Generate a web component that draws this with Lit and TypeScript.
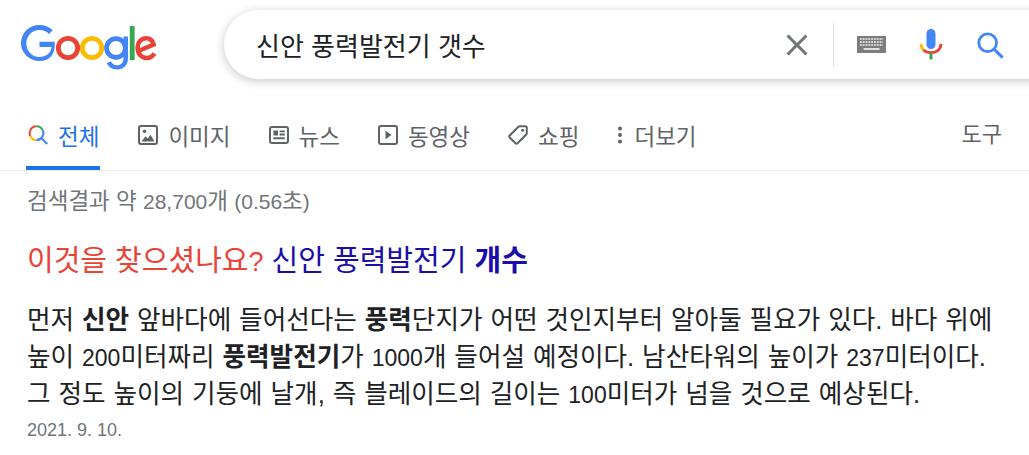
import { LitElement, html, css, svg } from "lit";
import { customElement } from "lit/decorators.js";

const tabs = [
  { label: "전체", active: true, icon: svg`<path d="M2.300 5.300A6.800 6.800 0 0 1 8.500 1.300" fill="none" stroke="#ea4335" stroke-width="2"/><path d="M8.500 1.300A6.800 6.800 0 0 1 14.700 5.300" fill="none" stroke="#34a853" stroke-width="2"/><path d="M2.300 5.300A6.800 6.800 0 0 0 2.300 11" fill="none" stroke="#ea4335" stroke-width="2"/><path d="M2.300 11A6.800 6.800 0 0 0 8.500 15" fill="none" stroke="#fbbc05" stroke-width="2"/><path d="M14.700 5.300A6.800 6.800 0 0 1 8.500 15" fill="none" stroke="#4285f4" stroke-width="2"/><path d="M13.300 13L19.300 19" stroke="#4285f4" stroke-width="2"/>` },
  { label: "이미지", icon: svg`<rect x="1" y="1" width="18" height="18" rx="2" fill="none" stroke="#5f6368" stroke-width="2"/><circle cx="6.500" cy="6.300" r="1.800" fill="#5f6368"/><path d="M3.500 16.500L7.500 11.200L9.800 13.500L12.500 9.800L16.500 16.500Z" fill="#5f6368"/>` },
  { label: "뉴스", icon: svg`<rect x="1" y="2" width="18" height="16" rx="2" fill="none" stroke="#5f6368" stroke-width="2"/><path d="M4.400 5.400H9V10.400H4.400ZM10.600 5.400H15.800V7.200H10.600ZM10.600 8.600H15.800V10.400H10.600ZM4.400 12.200H15.800V14.200H4.400Z" fill="#5f6368"/>` },
  { label: "동영상", icon: svg`<rect x="1" y="1" width="18" height="18" rx="2" fill="none" stroke="#5f6368" stroke-width="2"/><path d="M7.500 5.700L13.500 10L7.500 14.300Z" fill="#5f6368"/>` },
  { label: "쇼핑", icon: svg`<path d="M1.700 10.500L10.500 1.700C10.900 1.300 11.300 1.200 11.700 1.200H17.200C18 1.200 18.800 2 18.800 2.800V8.300C18.800 8.700 18.700 9.100 18.300 9.500L9.500 18.300C8.900 18.900 8.100 18.900 7.500 18.300L1.700 12.500C1.100 11.900 1.100 11.100 1.700 10.500Z" fill="none" stroke="#5f6368" stroke-width="2"/><circle cx="14.700" cy="5.300" r="1.500" fill="#5f6368"/>` },
  { label: "더보기", narrow: true, icon: svg`<circle cx="4" cy="3.500" r="2" fill="#5f6368"/><circle cx="4" cy="10" r="2" fill="#5f6368"/><circle cx="4" cy="16.500" r="2" fill="#5f6368"/>` },
];

@customElement("app-root")
export class AppRoot extends LitElement {
  static styles = css`
    :host {
      display: block;
      width: 1029px;
      height: 455px;
      overflow: hidden;
      background: #fff;
      font-family: "Liberation Sans", Arial, "Noto Sans CJK KR", sans-serif;
      color: #202124;
    }
    .head {
      display: flex;
      align-items: flex-start;
      height: 110px;
      padding-top: 10px;
      box-sizing: border-box;
    }
    .logo {
      width: 136px;
      height: 46px;
      margin: 14px 68px 0 20px;
      flex: none;
    }
    .search {
      flex: none;
      width: 840px;
      height: 69px;
      border-radius: 35px;
      box-shadow: 0 2px 8px 1px rgba(64, 60, 67, 0.24);
      display: flex;
      align-items: center;
      padding-left: 32px;
      box-sizing: border-box;
      font-size: 26px;
    }
    .query { width: 523px; flex: none; }
    .clear { width: 36px; height: 36px; margin-right: 18px; flex: none; }
    .rule { width: 1px; height: 44px; background: #dfe1e5; flex: none; margin-right: 23px; }
    .kb { width: 29px; height: 17px; margin-right: 33px; flex: none; }
    .mic { width: 24px; height: 31px; margin-right: 33px; flex: none; }
    .lens { width: 28px; height: 28px; flex: none; }
    .tabs {
      display: flex;
      height: 60px;
      border-bottom: 1px solid #ebebeb;
      padding-left: 26px;
      color: #5f6368;
      font-size: 22.5px;
    }
    .tab {
      display: flex;
      align-items: center;
      gap: 10px;
      height: 60px;
      padding-bottom: 10px;
      margin-right: 38px;
      box-sizing: border-box;
    }
    .tab svg { width: 20px; height: 20px; flex: none; }
    .tab svg.narrow { width: 8px; margin-left: -1px; }
    .tab.active {
      color: #1a73e8;
      border-bottom: 4px solid #1a73e8;
      padding: 0 1px 6px 2px;
    }
    .tools { margin-left: auto; margin-right: 27px; line-height: 50px; font-size: 22px; }
    .stats {
      font-size: 22.5px;
      color: #70757a;
      padding: 19px 0 0 27px;
      line-height: 24px;
    }
    .stats .lat { font-size: 21px; }
    .fix {
      font-size: 29px;
      line-height: 32px;
      padding: 31px 0 0 27px;
      color: #1a0dab;
    }
    .fix .ask { color: #ea4335; }
    .fix .lat { font-size: 27px; }
    .snippet {
      font-size: 25.6px;
      word-spacing: 0.8px;
      line-height: 36.5px;
      padding: 24px 0 0 27px;
      white-space: nowrap;
    }
    .snippet .lat { font-size: 23px; }
    .date {
      font-size: 18px;
      color: #70757a;
      padding-left: 27px;
      line-height: 24px;
      margin-top: 4px;
    }
  `;

  render() {
    return html`
      <div class="head">
        <svg class="logo" viewBox="0 0 136 46">
          <path d="M1 19C1 8.500 9.500 1 19.500 1C25 1 29.500 3 32.700 6.200L29 9.900C26.700 7.700 23.500 6 19.500 6C12 6 6.300 12 6.300 19.500C6.300 27 12 33 19.500 33C24.300 33 27 31 28.800 29.300C30.200 27.900 31.200 25.800 31.600 23H19.500V17.800H34.500C34.700 18.700 34.800 19.800 34.800 21C34.800 24.800 33.700 29.600 31 32.500C28 35.600 24.400 37 19.500 37C9.500 37 1 29 1 19.500Z" fill="#4285f4"/>
          <circle cx="48" cy="24" r="9.700" fill="none" stroke="#ea4335" stroke-width="4.800"/>
          <circle cx="72" cy="24" r="9.700" fill="none" stroke="#fbbc05" stroke-width="4.800"/>
          <circle cx="96" cy="24" r="9.400" fill="none" stroke="#4285f4" stroke-width="4.800"/>
          <path d="M108 12.500V34C108 41.500 103.500 45.500 97 45.500C91.500 45.500 88 42 86.800 39L91 37.300C91.800 39.300 93.800 41.300 97 41.300C101 41.300 103.500 38.800 103.500 34V12.500Z" fill="#4285f4"/>
          <rect x="109.800" y="2" width="4.800" height="34" fill="#34a853"/>
          <path d="M134.500 29.500C132.500 32.500 129.800 34 126.800 34C121 34 117.600 29.500 117.600 24C117.600 18 121.500 14.200 126.200 14.200C130.300 14.200 132.800 17 133.800 20.500L120 26.300" fill="none" stroke="#ea4335" stroke-width="4.400"/>
        </svg>
        <div class="search">
          <div class="query">신안 풍력발전기 갯수</div>
          <svg class="clear" viewBox="0 0 24 24"><path d="M19 6.410L17.590 5 12 10.590 6.410 5 5 6.410 10.590 12 5 17.590 6.410 19 12 13.410 17.590 19 19 17.590 13.410 12z" fill="#70757a"/></svg>
          <div class="rule"></div>
          <svg class="kb" viewBox="0 0 29 17">
            <rect width="29" height="17" fill="#7d7d7d"/>
            <path d="M3 3H26M3 6H26M3 9H26" stroke="#d8d8d8" stroke-width="1.800" stroke-dasharray="1.800 1"/>
            <rect x="6.500" y="12" width="16" height="2" fill="#e0e0e0"/>
          </svg>
          <svg class="mic" viewBox="0 0 24 31">
            <rect x="7.500" y="0" width="9" height="20" rx="4.500" fill="#4285f4"/>
            <path d="M2 15C2 17.500 3 19.500 4.500 21" fill="none" stroke="#fbbc05" stroke-width="3"/>
            <path d="M4.500 21C8 24.500 16 24.500 19.500 21C21 19.500 22 17.500 22 15" fill="none" stroke="#ea4335" stroke-width="3"/>
            <rect x="10.500" y="24.500" width="3" height="6" fill="#34a853"/>
          </svg>
          <svg class="lens" viewBox="0 0 30 30"><circle cx="12.500" cy="12.500" r="9.500" fill="none" stroke="#4285f4" stroke-width="3"/><path d="M19.500 19.500L28.500 28.500" stroke="#4285f4" stroke-width="3.200"/></svg>
        </div>
      </div>
      <div class="tabs">
        ${tabs.map(
          (t) => html`<div class="tab ${t.active ? "active" : ""}">
            <svg class=${t.narrow ? "narrow" : ""} viewBox="0 0 ${t.narrow ? 8 : 20} 20">${t.icon}</svg><span>${t.label}</span>
          </div>`
        )}
        <div class="tools">도구</div>
      </div>
      <div class="stats">검색결과 약 <span class="lat">28,700</span>개 <span class="lat">(0.56</span>초<span class="lat">)</span></div>
      <div class="fix"><span class="ask">이것을 찾으셨나요<span class="lat">?</span></span> 신안 풍력발전기 <b>개수</b></div>
      <div class="snippet">
        먼저 <b>신안</b> 앞바다에 들어선다는 <b>풍력</b>단지가 어떤 것인지부터 알아둘 필요가 있다. 바다 위에<br />
        높이 <span class="lat">200</span>미터짜리 <b>풍력발전기</b>가 <span class="lat">1000</span>개 들어설 예정이다. 남산타워의 높이가 <span class="lat">237</span>미터이다.<br />
        그 정도 높이의 기둥에 날개, 즉 블레이드의 길이는 <span class="lat">100</span>미터가 넘을 것으로 예상된다.
      </div>
      <div class="date">2021. 9. 10.</div>
    `;
  }
}
